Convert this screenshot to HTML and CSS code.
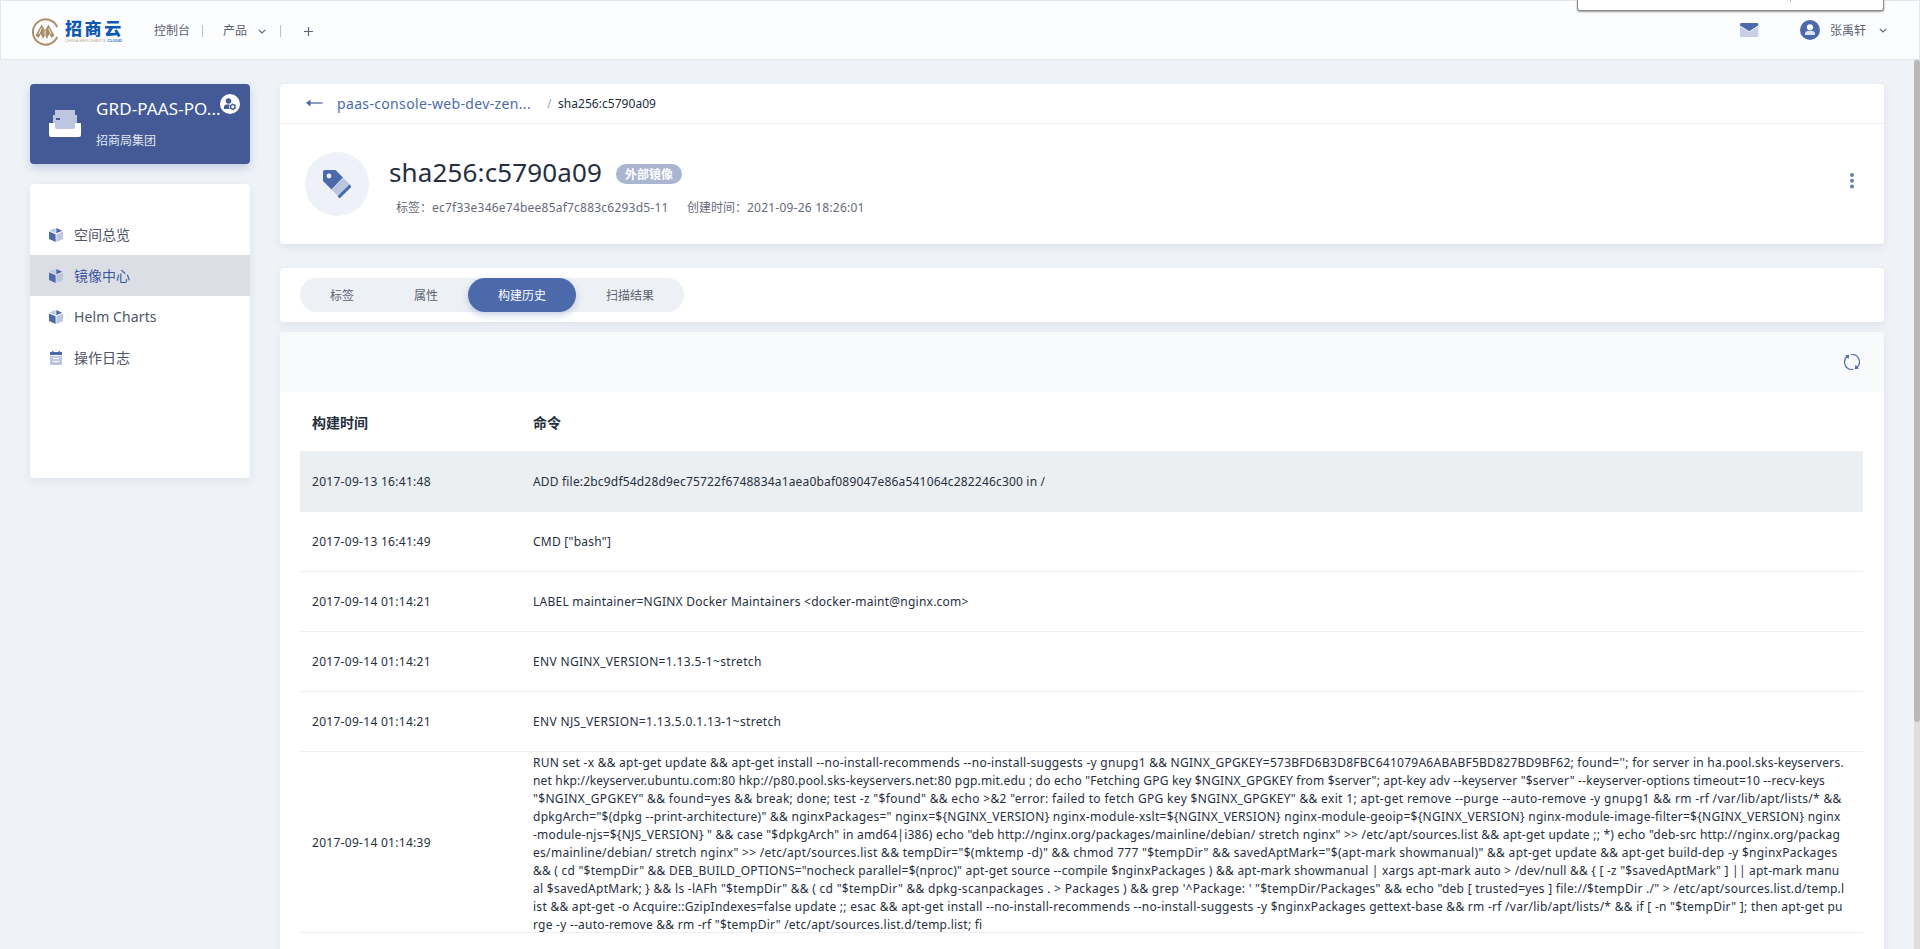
FILE: index.html
```html
<!DOCTYPE html>
<html lang="zh-CN">
<head>
<meta charset="utf-8">
<title>招商云</title>
<link rel="stylesheet" href="styles.css">
</head>
<body>
<svg class="defs" width="0" height="0">
  <symbol id="cube" viewBox="0 0 14 14">
    <path class="fill-light" d="M6.4 0 .6 2.5 6.6 5.2z"/>
    <path class="fill-main" d="M7.3 0 13.2 2.8 7.3 5.2z"/>
    <path class="cube-left" d="M0 3.4 6.6 6.2V14L0 11z"/>
    <path class="fill-light" d="M14 3.4 7.4 6.2V14L14 11z"/>
  </symbol>
  <symbol id="chevron" viewBox="0 0 8 5"><path d="M.8.8 4 4 7.2.8" fill="none" stroke="#5d6475" stroke-width="1.2"/></symbol>
</svg>
<header class="topbar">
  <div class="logo">
    <svg width="28" height="28" viewBox="0 0 28 28">
      <path d="M26.2 18.8A12.6 12.6 0 1 1 26.2 9.2" fill="none" stroke="#a9906a" stroke-width="2"/>
      <path d="M4.500 17.500 10.600 6.500 14 12.500 17.400 6.500 23.500 17.500 20.500 20 18.200 16 16 21 14 17 12 21 9.800 16 7.500 20z" fill="#a9906a"/>
      <path d="M10.300 10.500 7.800 16M14 13v4M17.700 10.500l2.500 5.500" stroke="#fcfdff" stroke-width=".9"/>
    </svg>
    <div class="logo-words">
      <div class="logo-name">招商云</div>
      <div class="logo-sub"><span>CHINA MERCHANTS</span> CLOUD</div>
    </div>
  </div>
  <nav class="topnav">
    <span class="nav-console">控制台</span><i class="bar"></i>
    <span class="nav-product">产品</span><svg class="nav-chev" width="8" height="5"><use href="#chevron"/></svg><i class="bar"></i>
    <svg class="plus" width="9" height="9" viewBox="0 0 9 9"><path d="M4.500 0v9M0 4.500h9" stroke="#5d6475" stroke-width="1.200"/></svg>
  </nav>
  <div class="user">
    <svg class="mail" width="19" height="14" viewBox="0 0 19 14"><path fill="#c7cfe6" d="M0 3.500 9.300 9 18.300 3.500V14H0z"/><path fill="#4c6aab" d="M1 0h16.300q1 0 1 1.500v1L9.300 8.200 0 2.500v-1Q0 0 1 0z"/></svg>
    <svg class="avatar" width="20" height="20" viewBox="0 0 20 20"><circle cx="10" cy="10" r="10" fill="#4c6aab"/><circle cx="10" cy="7.300" r="3.100" fill="#fff"/><path fill="#dbe1f0" d="M5 15v-1.300q0-2.700 3-2.700h4q3 0 3 2.700V15z"/></svg>
    <span class="user-name">张禹轩</span>
    <svg class="user-chev" width="8" height="5"><use href="#chevron"/></svg>
  </div>
  <div class="popup"></div>
</header>
<div class="page">
  <aside class="side">
    <div class="space">
      <svg class="tray" width="32" height="27" viewBox="0 0 32 27"><path d="M6 0h20v5h2v14H4V5h2z" fill="#bcc6df"/><path d="M0 13h6v4q0 2 2 2h16q2 0 2-2v-4h6v12q0 2-2 2H2q-2 0-2-2z" fill="#fff"/><path d="M7 8h4v2H7z" fill="#435a96"/></svg>
      <div>
        <div class="space-name">GRD-PAAS-PO...</div>
        <div class="space-org">招商局集团</div>
      </div>
      <svg class="space-badge" width="20" height="20" viewBox="0 0 20 20"><circle cx="10" cy="10" r="10" fill="#fff"/><g fill="#435a96"><circle cx="8.500" cy="7" r="2.800"/><path d="M4 15v-2q0-2.500 2.500-2.500H10V15z"/></g><circle cx="12.800" cy="12.800" r="3.700" fill="#fff"/><circle cx="12.800" cy="12.800" r="2.200" fill="none" stroke="#435a96" stroke-width="1.300"/><circle cx="12.800" cy="12.800" r="3" fill="none" stroke="#435a96" stroke-width=".8" stroke-dasharray="1.600 1.540"/></svg>
    </div>
    <ul class="menu">
      <li><svg width="14" height="14"><use href="#cube"/></svg>空间总览</li>
      <li class="active"><svg width="14" height="14"><use href="#cube"/></svg>镜像中心</li>
      <li class="latin"><svg width="14" height="14"><use href="#cube"/></svg>Helm Charts</li>
      <li><svg width="14" height="14" viewBox="0 0 14 14"><path fill="#4c6aab" d="M1 1h2V0h1.500v1h5V0H11v1h2v3H1z"/><path fill="#bcc6e0" d="M1 5h12v8q0 1-1 1H2q-1 0-1-1z"/><path stroke="#fff" d="M4 7.500h6M4 10.500h6"/></svg>操作日志</li>
    </ul>
  </aside>
  <main class="main">
    <section class="card detail">
      <div class="crumbs">
        <svg width="17" height="8" viewBox="0 0 17 8"><path d="M3 4h13.500" stroke="#7287ba" stroke-width="1.600"/><path d="M0 4 4.500.4v7.200z" fill="#4c6aab"/></svg>
        <a>paas-console-web-dev-zen...</a><span class="slash">/</span><span class="crumb-now">sha256:c5790a09</span>
      </div>
      <div class="info">
        <div class="tag-circle"><svg width="28" height="28" viewBox="0 0 28 28"><path fill="#4c6aab" d="M2 0h10.500L20 7.500 8.500 19.500.5 11.500Q0 11 0 10V2Q0 0 2 0z"/><circle cx="6" cy="6" r="2.400" fill="#eef1f9"/><path fill="#bcc6e0" d="M20 7.500 27 14.500 15.500 26.500 8.500 19.500z"/><path fill="#4c6aab" d="M26.500 14.500 28 16v1.200L17.600 27.500q-1 1-2 0l-1-1.200z"/></svg></div>
        <div class="info-text">
          <div class="title-row"><h1>sha256:c5790a09</h1><span class="badge">外部镜像</span></div>
          <div class="meta"><span class="meta-tag">标签：<b>ec7f33e346e74bee85af7c883c6293d5-11</b></span><span>创建时间：<b>2021-09-26 18:26:01</b></span></div>
        </div>
        <svg class="kebab" width="4" height="16" viewBox="0 0 4 16"><g fill="#647fb2"><circle cx="2" cy="2" r="2"/><circle cx="2" cy="7.700" r="2"/><circle cx="2" cy="13.400" r="2"/></g></svg>
      </div>
    </section>
    <section class="card tabs-card">
      <div class="tabs"><span>标签</span><span>属性</span><span class="on">构建历史</span><span>扫描结果</span></div>
    </section>
    <section class="card history">
      <div class="toolbar"><svg width="16" height="16" viewBox="0 0 16 16"><g fill="none" stroke="#4c6aab" stroke-width="1.200"><path d="M7 .6A7.400 7.400 0 0 1 12.500 13.800M9 15.400A7.400 7.400 0 0 1 3.500 2.200"/></g><path fill="#4c6aab" d="M1 1.500 5.300.8 4.600 5zM15 14.500l-4.300.7.7-4.200z"/></svg></div>
      <div class="table">
        <div class="row head"><span>构建时间</span><span>命令</span></div>
        <div class="row hover"><span>2017-09-13 16:41:48</span><span class="snug">ADD file:2bc9df54d28d9ec75722f6748834a1aea0baf089047e86a541064c282246c300 in /</span></div>
        <div class="row"><span>2017-09-13 16:41:49</span><span>CMD ["bash"]</span></div>
        <div class="row"><span>2017-09-14 01:14:21</span><span>LABEL maintainer=NGINX Docker Maintainers &lt;docker-maint@nginx.com&gt;</span></div>
        <div class="row"><span>2017-09-14 01:14:21</span><span class="loose">ENV NGINX_VERSION=1.13.5-1~stretch</span></div>
        <div class="row"><span>2017-09-14 01:14:21</span><span class="loose">ENV NJS_VERSION=1.13.5.0.1.13-1~stretch</span></div>
        <div class="row long"><span>2017-09-14 01:14:39</span>
          <div class="lines">
            <div class="l1">RUN set -x &amp;&amp; apt-get update &amp;&amp; apt-get install --no-install-recommends --no-install-suggests -y gnupg1 &amp;&amp; NGINX_GPGKEY=573BFD6B3D8FBC641079A6ABABF5BD827BD9BF62; found=''; for server in ha.pool.sks-keyservers.</div>
            <div class="l2">net hkp://keyserver.ubuntu.com:80 hkp://p80.pool.sks-keyservers.net:80 pgp.mit.edu ; do echo "Fetching GPG key $NGINX_GPGKEY from $server"; apt-key adv --keyserver "$server" --keyserver-options timeout=10 --recv-keys</div>
            <div class="l3">"$NGINX_GPGKEY" &amp;&amp; found=yes &amp;&amp; break; done; test -z "$found" &amp;&amp; echo &gt;&amp;2 "error: failed to fetch GPG key $NGINX_GPGKEY" &amp;&amp; exit 1; apt-get remove --purge --auto-remove -y gnupg1 &amp;&amp; rm -rf /var/lib/apt/lists/* &amp;&amp;</div>
            <div class="l4">dpkgArch="$(dpkg --print-architecture)" &amp;&amp; nginxPackages=" nginx=${NGINX_VERSION} nginx-module-xslt=${NGINX_VERSION} nginx-module-geoip=${NGINX_VERSION} nginx-module-image-filter=${NGINX_VERSION} nginx</div>
            <div class="l5">-module-njs=${NJS_VERSION} " &amp;&amp; case "$dpkgArch" in amd64|i386) echo "deb http://nginx.org/packages/mainline/debian/ stretch nginx" &gt;&gt; /etc/apt/sources.list &amp;&amp; apt-get update ;; *) echo "deb-src http://nginx.org/packag</div>
            <div class="l6">es/mainline/debian/ stretch nginx" &gt;&gt; /etc/apt/sources.list &amp;&amp; tempDir="$(mktemp -d)" &amp;&amp; chmod 777 "$tempDir" &amp;&amp; savedAptMark="$(apt-mark showmanual)" &amp;&amp; apt-get update &amp;&amp; apt-get build-dep -y $nginxPackages</div>
            <div class="l7">&amp;&amp; ( cd "$tempDir" &amp;&amp; DEB_BUILD_OPTIONS="nocheck parallel=$(nproc)" apt-get source --compile $nginxPackages ) &amp;&amp; apt-mark showmanual | xargs apt-mark auto &gt; /dev/null &amp;&amp; { [ -z "$savedAptMark" ] || apt-mark manu</div>
            <div class="l8">al $savedAptMark; } &amp;&amp; ls -lAFh "$tempDir" &amp;&amp; ( cd "$tempDir" &amp;&amp; dpkg-scanpackages . &gt; Packages ) &amp;&amp; grep '^Package: ' "$tempDir/Packages" &amp;&amp; echo "deb [ trusted=yes ] file://$tempDir ./" &gt; /etc/apt/sources.list.d/temp.l</div>
            <div class="l9">ist &amp;&amp; apt-get -o Acquire::GzipIndexes=false update ;; esac &amp;&amp; apt-get install --no-install-recommends --no-install-suggests -y $nginxPackages gettext-base &amp;&amp; rm -rf /var/lib/apt/lists/* &amp;&amp; if [ -n "$tempDir" ]; then apt-get pu</div>
            <div class="l10">rge -y --auto-remove &amp;&amp; rm -rf "$tempDir" /etc/apt/sources.list.d/temp.list; fi</div>
          </div>
        </div>
      </div>
    </section>
  </main>
  <div class="scroll"><div class="thumb"></div></div>
</div>
</body>
</html>
```
FILE: styles.css
```css
* { box-sizing: border-box; }
body {
  margin: 0; height: 949px; overflow: hidden; background: #eff3f8; color: #262f40;
  font: 12px/18px "Noto Sans", "Noto Sans CJK SC", sans-serif;
  display: flex; flex-direction: column;
}
svg { flex: none; display: block; }
.defs { position: absolute; }
.fill-main, .cube-left { fill: #4c6aab; }
.fill-light { fill: #bcc6e0; }

.topbar {
  position: relative; flex: none; height: 60px; padding: 0 32px 0 30px;
  display: flex; align-items: center; background: #fcfdff; border: 1px solid #e3e6eb; color: #5a6070;
}
.logo { display: flex; width: 123px; gap: 6px; padding-top: 3px; }
.logo-words { width: 60px; white-space: nowrap; }
.logo-name { font: 900 17px/20px "Noto Sans CJK SC", sans-serif; letter-spacing: 2.6px; color: #0f59b3; }
.logo-sub { font: 700 4px/5px "Liberation Sans", sans-serif; color: #2a6cc0; letter-spacing: .15px; }
.logo-sub span { color: #b6a88f; font-weight: 400; }
.topnav { display: flex; align-items: center; flex: 1; padding-top: 2px; }
.bar { width: 1px; height: 12px; background: #b9bdc6; }
.nav-console { margin-right: 12px; }
.nav-product { margin-left: 20px; }
.nav-chev { margin: 0 14px 0 11px; }
.plus { margin-left: 23px; }
.user { display: flex; align-items: center; }
.user-name { padding-top: 2px; }
.mail { margin-right: 41px; }
.avatar { margin-right: 10px; }
.user-chev { margin-left: 13px; }
.popup {
  position: absolute; left: 1576px; top: -1px; width: 307px; height: 11px; background: #fff;
  border: 1px solid #8d8d8d; border-top: 0; border-radius: 0 0 3px 3px; box-shadow: 0 1px 2px #0006;
}
.popup::before { content: ""; display: block; width: 1px; height: 2px; margin-left: 212px; background: #b9b9b9; }

.page { flex: 1; min-height: 0; display: flex; align-items: flex-start; padding-left: 30px; }
.side { width: 220px; margin-top: 24px; }
.space {
  position: relative; height: 80px; padding: 13px 0 0 19px; display: flex; gap: 15px;
  background: #435a96; color: #fff; border-radius: 4px; box-shadow: 0 4px 8px #435a9640;
}
.tray { margin-top: 13px; }
.space-name { font-size: 17px; line-height: 24px; white-space: nowrap; letter-spacing: .1px; }
.space-org { margin-top: 11px; color: #dfe4f0; }
.space-badge { position: absolute; left: 190px; top: 10px; }
.menu {
  list-style: none; margin: 20px 0 0; padding: 30px 0 0; height: 294px; background: #fff;
  border-radius: 4px; box-shadow: 0 3px 8px #24304014;
}
.menu li { height: 41px; padding-left: 19px; display: flex; align-items: center; gap: 11px; font-size: 14px; color: #4d5566; }
.menu .latin { letter-spacing: .1px; }
.menu .active { background: #dbdfe5; color: #3c569b; }

.main { width: 1604px; margin: 24px 30px 0; height: 865px; }
.card { background: #fff; border-radius: 4px; box-shadow: 0 3px 8px #24304014; }
.detail { height: 160px; }
.crumbs { height: 40px; padding: 0 0 2px 26px; display: flex; align-items: center; border-bottom: 1px solid #eceef2; }
.crumbs a { width: 210px; margin-left: 14px; font-size: 14px; letter-spacing: .34px; color: #4c6aab; padding-top: 2px; }
.slash { width: 11px; padding-top: 3px; color: #9aa1ad; }
.crumb-now { padding-top: 3px; letter-spacing: .04px; }
.info { display: flex; padding: 28px 30px 0 25px; }
.tag-circle { width: 64px; height: 64px; border-radius: 50%; background: #eef1f9; display: flex; align-items: center; justify-content: center; }
.info-text { flex: 1; padding-left: 20px; }
.title-row { display: flex; align-items: center; height: 40px; gap: 14px; }
h1 { margin: 0; font-size: 26px; line-height: 40px; font-weight: 400; letter-spacing: .14px; }
.badge { height: 20px; padding: 0 9px; border-radius: 10px; background: #a9b5d1; color: #fff; font-weight: 700; line-height: 21px; margin-top: 3px; }
.meta { display: flex; padding: 7px 0 0 7px; color: #656a78; }
.meta b { font-weight: 400; letter-spacing: .22px; }
.meta-tag { width: 291px; }
.kebab { margin-top: 21px; }
.tabs-card { margin-top: 24px; height: 54px; padding: 10px 20px; }
.tabs { display: inline-flex; height: 34px; border-radius: 17px; background: #edf0f5; color: #5d6371; line-height: 36px; }
.tabs span { padding: 0 30px; }
.tabs .on { background: #4c6aab; color: #fff; border-radius: 17px; box-shadow: 0 3px 7px #4c6aab50; }
.history { margin-top: 10px; height: 640px; }
.toolbar { height: 60px; background: #f9fafc; border-radius: 4px 4px 0 0; display: flex; justify-content: flex-end; align-items: center; padding-right: 24px; }
.table { margin: 0 21px 0 20px; }
.row { height: 60px; display: flex; align-items: center; border-bottom: 1px solid #eff0f3; letter-spacing: .24px; padding-left: 12px; white-space: nowrap; }
.row > span:first-child { width: 221px; letter-spacing: .29px; }
.row.head, .row.head > span:first-child { letter-spacing: 0; }
.head { font-size: 14px; font-weight: 700; padding-top: 2px; }
.hover { background: #ebeff2; }
.snug { letter-spacing: .18px; }
.loose { letter-spacing: .33px; }
.long { height: 181px; padding-top: 1px; }
.lines { height: 180px; padding-top: 1px; }
.l1 { letter-spacing: .26px; }
.l2 { letter-spacing: .18px; }
.l3 { letter-spacing: .33px; }
.l4 { letter-spacing: .27px; }
.l5 { letter-spacing: .23px; }
.l6 { letter-spacing: .3px; }
.l7 { letter-spacing: .22px; }
.l8 { letter-spacing: .28px; }
.l9 { letter-spacing: .27px; }

.scroll { width: 6px; height: 889px; margin-left: auto; background: #dedede; }
.thumb { height: 662px; background: #b9b9b9; border-radius: 3px; }
```
